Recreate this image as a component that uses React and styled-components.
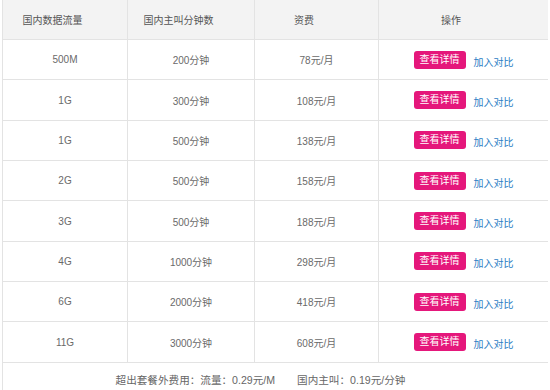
import React from 'react';
import styled, { createGlobalStyle } from 'styled-components';

const GlobalStyle = createGlobalStyle`
  html, body {
    margin: 0;
    padding: 0;
    background: #fff;
  }
  body {
    font-family: "Liberation Sans", "Noto Sans CJK SC", sans-serif;
  }
`;

const Wrapper = styled.div`
  width: 546px;
  margin-left: 2px;
  overflow: hidden;
`;

const StyledTable = styled.table`
  width: 546px;
  border-collapse: collapse;
  table-layout: fixed;
  font-size: 10px;
  color: #6a6a6a;
`;

const HeaderCell = styled.th`
  height: 39px;
  padding: 0 25px 0 0;
  background: #f3f3f3;
  border: 1px solid #e3e3e3;
  border-top: none;
  font-weight: normal;
  color: #555;
  text-align: center;
`;

const Row = styled.tr`
  height: 40.35px;
  background: #fff;
`;

const Cell = styled.td`
  padding: 0;
  border: 1px solid #e3e3e3;
  text-align: center;
  vertical-align: middle;
`;

const Actions = styled.div`
  display: flex;
  align-items: center;
  justify-content: center;
  gap: 8px;
`;

const DetailButton = styled.button`
  height: 18px;
  padding: 0 6px;
  border: none;
  border-radius: 3px;
  background: #e5177b;
  color: #fff;
  font-family: inherit;
  font-size: 10px;
  line-height: 18px;
  cursor: pointer;
`;

const CompareLink = styled.a`
  color: #2a7cc4;
  font-size: 10px;
  text-decoration: none;
  cursor: pointer;
  margin-top: 3px;
`;

const FooterCell = styled.td`
  height: 34px;
  padding: 0 30px 0 0;
  border: 1px solid #e3e3e3;
  text-align: center;
  font-size: 10.6px;
  color: #666;
`;

const Gap = styled.span`
  display: inline-block;
  width: 22px;
`;

const columns = [
  { key: 'flow', title: '国内数据流量', width: 125 },
  { key: 'minutes', title: '国内主叫分钟数', width: 127 },
  { key: 'price', title: '资费', width: 124 },
  { key: 'action', title: '操作', width: 170 },
];

const plans = [
  { id: 1, flow: '500M', minutes: '200分钟', price: '78元/月' },
  { id: 2, flow: '1G', minutes: '300分钟', price: '108元/月' },
  { id: 3, flow: '1G', minutes: '500分钟', price: '138元/月' },
  { id: 4, flow: '2G', minutes: '500分钟', price: '158元/月' },
  { id: 5, flow: '3G', minutes: '500分钟', price: '188元/月' },
  { id: 6, flow: '4G', minutes: '1000分钟', price: '298元/月' },
  { id: 7, flow: '6G', minutes: '2000分钟', price: '418元/月' },
  { id: 8, flow: '11G', minutes: '3000分钟', price: '608元/月' },
];

const App = () => {
  return (
    <>
      <GlobalStyle />
      <Wrapper>
        <StyledTable>
          <colgroup>
            {columns.map((c) => (
              <col key={c.key} style={{ width: c.width }} />
            ))}
          </colgroup>
          <thead>
            <tr>
              {columns.map((c) => (
                <HeaderCell key={c.key}>{c.title}</HeaderCell>
              ))}
            </tr>
          </thead>
          <tbody>
            {plans.map((p) => (
              <Row key={p.id}>
                <Cell>{p.flow}</Cell>
                <Cell>{p.minutes}</Cell>
                <Cell>{p.price}</Cell>
                <Cell>
                  <Actions>
                    <DetailButton>查看详情</DetailButton>
                    <CompareLink>加入对比</CompareLink>
                  </Actions>
                </Cell>
              </Row>
            ))}
            <tr>
              <FooterCell colSpan={4}>
                超出套餐外费用：流量：0.29元/M<Gap />国内主叫：0.19元/分钟
              </FooterCell>
            </tr>
          </tbody>
        </StyledTable>
      </Wrapper>
    </>
  );
};

export default App;
